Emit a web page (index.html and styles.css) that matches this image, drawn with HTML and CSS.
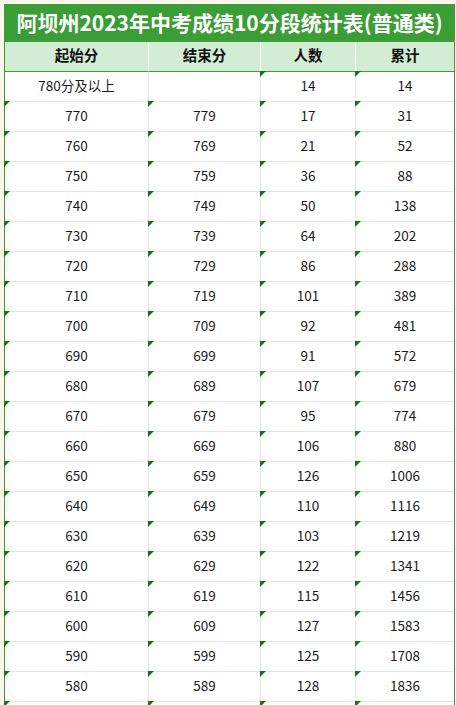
FILE: index.html
```html
<!DOCTYPE html>
<html lang="zh-CN">
<head>
<meta charset="utf-8">
<title>阿坝州2023年中考成绩10分段统计表(普通类)</title>
<link rel="stylesheet" href="styles.css">
</head>
<body>
<div class="sheet">
  <div class="title">阿坝州2023年中考成绩10分段统计表(普通类)</div>
  <div class="row head">
    <div class="cell">起始分</div>
    <div class="cell">结束分</div>
    <div class="cell">人数</div>
    <div class="cell">累计</div>
  </div>
  <div class="row">
    <div class="cell">780分及以上</div>
    <div class="cell"></div>
    <div class="cell mark">14</div>
    <div class="cell mark">14</div>
  </div>
  <div class="row"><div class="cell mark">770</div><div class="cell mark">779</div><div class="cell mark">17</div><div class="cell mark">31</div></div>
  <div class="row"><div class="cell mark">760</div><div class="cell mark">769</div><div class="cell mark">21</div><div class="cell mark">52</div></div>
  <div class="row"><div class="cell mark">750</div><div class="cell mark">759</div><div class="cell mark">36</div><div class="cell mark">88</div></div>
  <div class="row"><div class="cell mark">740</div><div class="cell mark">749</div><div class="cell mark">50</div><div class="cell mark">138</div></div>
  <div class="row"><div class="cell mark">730</div><div class="cell mark">739</div><div class="cell mark">64</div><div class="cell mark">202</div></div>
  <div class="row"><div class="cell mark">720</div><div class="cell mark">729</div><div class="cell mark">86</div><div class="cell mark">288</div></div>
  <div class="row"><div class="cell mark">710</div><div class="cell mark">719</div><div class="cell mark">101</div><div class="cell mark">389</div></div>
  <div class="row"><div class="cell mark">700</div><div class="cell mark">709</div><div class="cell mark">92</div><div class="cell mark">481</div></div>
  <div class="row"><div class="cell mark">690</div><div class="cell mark">699</div><div class="cell mark">91</div><div class="cell mark">572</div></div>
  <div class="row"><div class="cell mark">680</div><div class="cell mark">689</div><div class="cell mark">107</div><div class="cell mark">679</div></div>
  <div class="row"><div class="cell mark">670</div><div class="cell mark">679</div><div class="cell mark">95</div><div class="cell mark">774</div></div>
  <div class="row"><div class="cell mark">660</div><div class="cell mark">669</div><div class="cell mark">106</div><div class="cell mark">880</div></div>
  <div class="row"><div class="cell mark">650</div><div class="cell mark">659</div><div class="cell mark">126</div><div class="cell mark">1006</div></div>
  <div class="row"><div class="cell mark">640</div><div class="cell mark">649</div><div class="cell mark">110</div><div class="cell mark">1116</div></div>
  <div class="row"><div class="cell mark">630</div><div class="cell mark">639</div><div class="cell mark">103</div><div class="cell mark">1219</div></div>
  <div class="row"><div class="cell mark">620</div><div class="cell mark">629</div><div class="cell mark">122</div><div class="cell mark">1341</div></div>
  <div class="row"><div class="cell mark">610</div><div class="cell mark">619</div><div class="cell mark">115</div><div class="cell mark">1456</div></div>
  <div class="row"><div class="cell mark">600</div><div class="cell mark">609</div><div class="cell mark">127</div><div class="cell mark">1583</div></div>
  <div class="row"><div class="cell mark">590</div><div class="cell mark">599</div><div class="cell mark">125</div><div class="cell mark">1708</div></div>
  <div class="row"><div class="cell mark">580</div><div class="cell mark">589</div><div class="cell mark">128</div><div class="cell mark">1836</div></div>
  <div class="row"><div class="cell mark"></div><div class="cell mark"></div><div class="cell mark"></div><div class="cell mark"></div></div>
</div>
</body>
</html>
```

FILE: styles.css
```css
html, body {
  margin: 0;
  padding: 0;
  background: #fcf5ea;
}
body {
  padding: 4px 0 0 4px;
  font-family: "Noto Sans CJK SC", "Noto Sans", sans-serif;
  color: #1a1a1a;
  overflow: hidden;
  height: 705px;
  box-sizing: border-box;
}
.sheet {
  width: 451px;
  border-left: 1px solid #3a9d35;
  border-right: 1px solid #3a9d35;
  box-sizing: border-box;
  background: #ffffff;
}
.title {
  height: 38px;
  margin: 0 -1px;
  background: #3a9d35;
  color: #ffffff;
  font-weight: bold;
  font-size: 21px;
  line-height: 36px;
  padding-bottom: 2px;
  box-sizing: border-box;
  text-align: center;
  white-space: nowrap;
}
.row {
  display: grid;
  grid-template-columns: 144px 112px 95px 98px;
  height: 30px;
}
.cell {
  position: relative;
  border-right: 1px solid #dde9de;
  border-bottom: 1px solid #dde9de;
  display: flex;
  align-items: center;
  justify-content: center;
  padding-bottom: 2px;
  font-size: 13.5px;
  line-height: 1;
}
.cell:last-child {
  border-right: none;
}
.head {
  background: #d3ecd4;
}
.head .cell {
  border-right-color: #ffffff;
  border-bottom: 1px solid #3a9d35;
  font-weight: bold;
  font-size: 14.5px;
  color: #111111;
}
.mark::before {
  content: "";
  position: absolute;
  left: -1px;
  top: -1px;
  width: 0;
  height: 0;
  border-top: 6px solid #0b7a10;
  border-right: 6px solid transparent;
}
```
